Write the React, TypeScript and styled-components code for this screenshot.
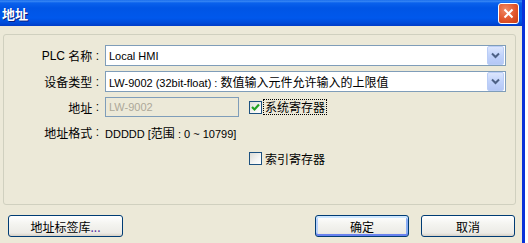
import React from "react";
import styled, { createGlobalStyle } from "styled-components";

const GlobalStyle = createGlobalStyle`
  html, body {
    margin: 0;
    padding: 0;
    background: #ffffff;
  }
  body {
    font-family: "Liberation Sans", "Noto Sans CJK SC", sans-serif;
    font-size: 11px;
    color: #000000;
  }
`;

const Window = styled.div`
  width: 522px;
  height: 243px;
  border-right: 3px solid #0831d9;
  background: #ece9d8;
  display: flex;
  flex-direction: column;
  overflow: hidden;
`;

const TitleBar = styled.div`
  height: 26px;
  flex: none;
  display: flex;
  align-items: center;
  justify-content: space-between;
  padding: 0 3px 0 2px;
  background: linear-gradient(
    to bottom,
    #0a5fe8 0,
    #3d8cf5 1px,
    #0a61ec 3px,
    #0055e5 8px,
    #0058ec 18px,
    #004bd9 23px,
    #003cc7 26px
  );
`;

const Title = styled.div`
  font-family: "Noto Sans CJK SC", sans-serif;
  font-weight: bold;
  font-size: 13px;
  color: #ffffff;
  text-shadow: 1px 1px 0 #0a1e80;
`;

const CloseButton = styled.div`
  width: 19px;
  height: 19px;
  border: 1px solid #ffffff;
  border-radius: 3px;
  background: radial-gradient(circle at 35% 30%, #f08a66 0, #e2552b 55%, #c73d14 100%);
  display: flex;
  align-items: center;
  justify-content: center;
`;

const Body = styled.div`
  flex: 1;
  display: flex;
  flex-direction: column;
  padding: 8px 6px 0 3px;
`;

const GroupBox = styled.div`
  box-sizing: border-box;
  flex: none;
  height: 171px;
  border: 1px solid #d0d0bf;
  border-radius: 3px;
  padding: 10px 9px 0 0;
  display: grid;
  grid-template-columns: 95px 1fr;
  grid-template-rows: 21px 21px 20px 20px 20px;
  align-content: start;
  column-gap: 6px;
  row-gap: 5px;
`;

const Label = styled.div`
  display: flex;
  align-items: center;
  justify-content: flex-end;
  white-space: nowrap;
  font-size: 12px;
`;

const Cjk = styled.span`
  font-family: "Noto Sans CJK SC", sans-serif;
  font-size: 12px;
`;

const Field = styled.div<{ $offset?: number }>`
  display: flex;
  align-items: center;
  min-width: 0;
  margin-top: ${({ $offset }) => $offset ?? 0}px;
`;

const Input = styled.div<{ $disabled?: boolean; $width?: number }>`
  box-sizing: border-box;
  height: 100%;
  width: ${({ $width }) => ($width ? `${$width}px` : "100%")};
  border: 1px solid #7f9db9;
  background: ${({ $disabled }) => ($disabled ? "#ece9d8" : "#ffffff")};
  color: ${({ $disabled }) => ($disabled ? "#aca899" : "#000000")};
  display: flex;
  align-items: center;
  padding-left: 3px;
  white-space: nowrap;
  overflow: hidden;
`;

const Combo = styled(Input)`
  padding-right: 0;
  justify-content: space-between;
`;

const ComboText = styled.span`
  overflow: hidden;
`;

const DropButton = styled.div`
  flex: none;
  width: 15px;
  height: 17px;
  margin-right: 1px;
  border: 1px solid #bacdf6;
  border-radius: 2px;
  background: linear-gradient(to bottom, #dce6fd 0, #c1d3fb 50%, #b4c7f5 100%);
  display: flex;
  align-items: center;
  justify-content: center;
`;

const CheckRow = styled.div<{ $indent: number }>`
  display: flex;
  align-items: center;
  margin-left: ${({ $indent }) => $indent}px;
  gap: 2px;
  font-family: "Noto Sans CJK SC", sans-serif;
  font-size: 12px;
`;

const Box = styled.div`
  box-sizing: border-box;
  width: 13px;
  height: 13px;
  border: 1px solid #1c5180;
  background: linear-gradient(135deg, #dcdcd7 0, #f5f5f3 60%, #ffffff 100%);
  display: flex;
  align-items: center;
  justify-content: center;
`;

const CheckText = styled.span<{ $focus?: boolean }>`
  padding: 0 1px;
  line-height: 14px;
  outline: ${({ $focus }) => ($focus ? "1px dotted #000000" : "none")};
  outline-offset: 0;
`;

const Plain = styled.span`
  white-space: nowrap;
`;

const ButtonRow = styled.div`
  display: flex;
  align-items: center;
  margin-top: 10px;
  padding: 0 1px 0 5px;
`;

const Spacer = styled.div`
  flex: 1;
`;

const Button = styled.div<{ $width: number; $default?: boolean }>`
  box-sizing: border-box;
  width: ${({ $width }) => $width}px;
  height: 22px;
  margin-left: 12px;
  border: 1px solid #003c74;
  border-radius: 3px;
  background: linear-gradient(to bottom, #ffffff 0, #f4f4f0 40%, #ecebe6 85%, #d6d0c5 100%);
  box-shadow: ${({ $default }) =>
    $default ? "inset 0 2px 0 #cee7ff, inset 0 -2px 0 #6982ee, inset 2px 0 0 #b8d2fc, inset -2px 0 0 #89adf4" : "none"};
  display: flex;
  align-items: center;
  justify-content: center;
  font-family: "Noto Sans CJK SC", sans-serif;
  font-size: 12px;
  &:first-child {
    margin-left: 0;
  }
`;

const Dots = styled.span`
  color: #5a2fa0;
`;

function Chevron() {
  return (
    <svg width="9" height="7" viewBox="0 0 9 7">
      <path d="M1 1.5 L4.5 5 L8 1.5" fill="none" stroke="#4d6185" strokeWidth="2" />
    </svg>
  );
}

function Tick() {
  return (
    <svg width="9" height="9" viewBox="0 0 9 9">
      <path d="M1 4 L3.5 6.5 L8 1.5" fill="none" stroke="#21a121" strokeWidth="2.2" />
    </svg>
  );
}

function CloseX() {
  return (
    <svg width="11" height="11" viewBox="0 0 11 11">
      <path d="M1.5 1.5 L9.5 9.5 M9.5 1.5 L1.5 9.5" stroke="#ffffff" strokeWidth="2" />
    </svg>
  );
}

export default function App() {
  return (
    <>
      <GlobalStyle />
      <Window>
        <TitleBar>
          <Title>地址</Title>
          <CloseButton>
            <CloseX />
          </CloseButton>
        </TitleBar>
        <Body>
          <GroupBox>
            <Label>
              PLC&nbsp;<Cjk>名称</Cjk>&nbsp;:
            </Label>
            <Field>
              <Combo>
                <ComboText>Local HMI</ComboText>
                <DropButton>
                  <Chevron />
                </DropButton>
              </Combo>
            </Field>

            <Label>
              <Cjk>设备类型</Cjk>&nbsp;:
            </Label>
            <Field>
              <Combo>
                <ComboText>
                  LW-9002 (32bit-float) : <Cjk>数值输入元件允许输入的上限值</Cjk>
                </ComboText>
                <DropButton>
                  <Chevron />
                </DropButton>
              </Combo>
            </Field>

            <Label>
              <Cjk>地址</Cjk>&nbsp;:
            </Label>
            <Field>
              <Input $disabled $width={134}>
                LW-9002
              </Input>
              <CheckRow $indent={10}>
                <Box>
                  <Tick />
                </Box>
                <CheckText $focus>系统寄存器</CheckText>
              </CheckRow>
            </Field>

            <Label>
              <Cjk>地址格式</Cjk>&nbsp;:
            </Label>
            <Field>
              <Plain>
                DDDDD [<Cjk>范围</Cjk> : 0 ~ 10799]
              </Plain>
            </Field>

            <div />
            <Field $offset={3}>
              <CheckRow $indent={144}>
                <Box />
                <CheckText>索引寄存器</CheckText>
              </CheckRow>
            </Field>
          </GroupBox>
          <ButtonRow>
            <Button $width={115}>
              地址标签库<Dots>...</Dots>
            </Button>
            <Spacer />
            <Button $width={94} $default>
              确定
            </Button>
            <Button $width={94}>取消</Button>
          </ButtonRow>
        </Body>
      </Window>
    </>
  );
}
